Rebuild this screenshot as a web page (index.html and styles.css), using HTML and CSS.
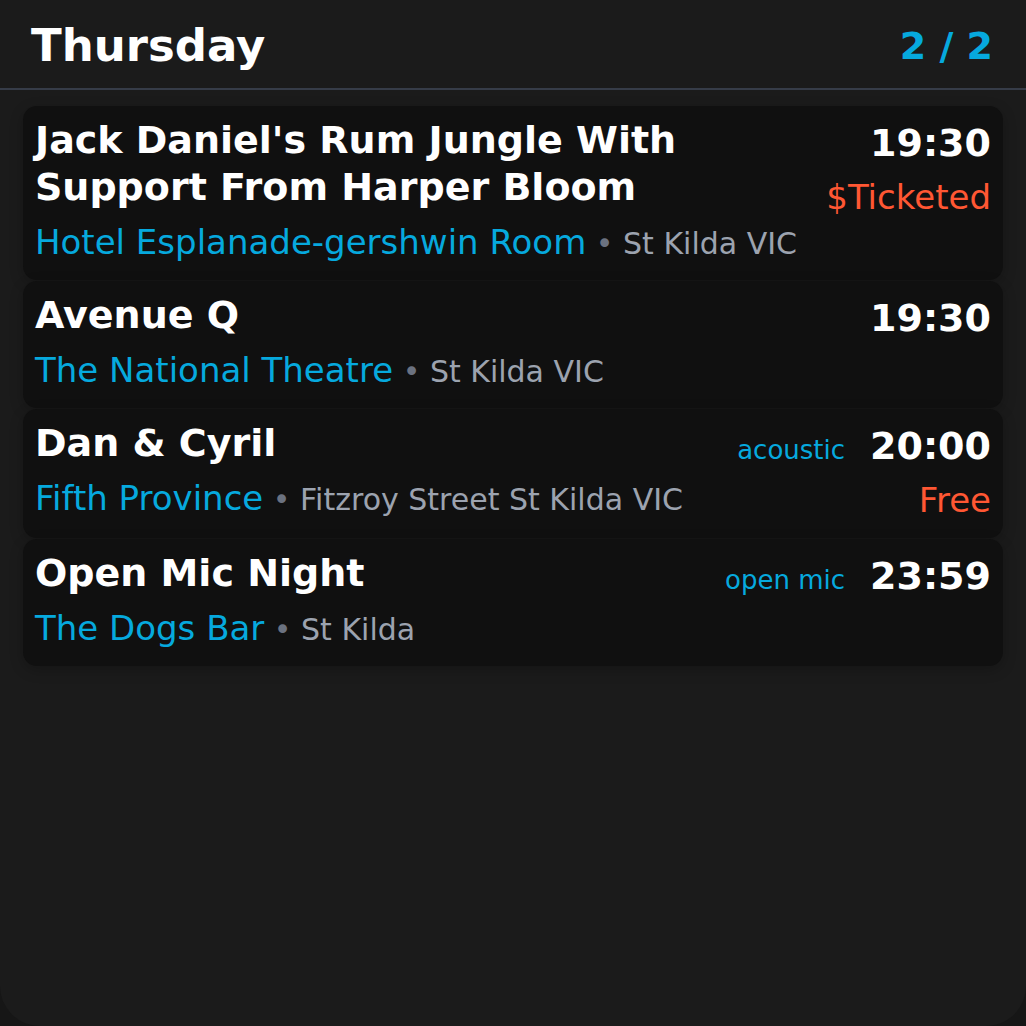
FILE: index.html
```html
<!DOCTYPE html>
<html lang="en">
<head>
<meta charset="utf-8">
<title>Thursday</title>
<link rel="stylesheet" href="styles.css">
</head>
<body>
<div class="widget">
  <header class="head">
    <h1 class="day">Thursday</h1>
    <span class="page">2 / 2</span>
  </header>
  <div class="list">
    <div class="card">
      <div class="main">
        <div class="title">Jack Daniel's Rum Jungle With Support From Harper Bloom</div>
        <div class="meta"><span class="venue">Hotel Esplanade-gershwin Room</span><span class="dot"> • </span><span class="loc">St Kilda VIC</span></div>
      </div>
      <div class="side">
        <div class="when"><span class="time">19:30</span></div>
        <div class="price">$Ticketed</div>
      </div>
    </div>
    <div class="card">
      <div class="main">
        <div class="title">Avenue Q</div>
        <div class="meta"><span class="venue">The National Theatre</span><span class="dot"> • </span><span class="loc">St Kilda VIC</span></div>
      </div>
      <div class="side">
        <div class="when"><span class="time">19:30</span></div>
      </div>
    </div>
    <div class="card">
      <div class="main">
        <div class="title">Dan &amp; Cyril</div>
        <div class="meta"><span class="venue">Fifth Province</span><span class="dot"> • </span><span class="loc">Fitzroy Street St Kilda VIC</span></div>
      </div>
      <div class="side">
        <div class="when"><span class="tag">acoustic</span><span class="time">20:00</span></div>
        <div class="price">Free</div>
      </div>
    </div>
    <div class="card">
      <div class="main">
        <div class="title">Open Mic Night</div>
        <div class="meta"><span class="venue">The Dogs Bar</span><span class="dot"> • </span><span class="loc">St Kilda</span></div>
      </div>
      <div class="side">
        <div class="when"><span class="tag">open mic</span><span class="time">23:59</span></div>
      </div>
    </div>
  </div>
</div>
</body>
</html>
```
FILE: styles.css
```css
html, body {
  margin: 0;
  padding: 0;
  background: #161616;
}
body {
  font-family: "DejaVu Sans", "Liberation Sans", sans-serif;
  color: #ffffff;
}
.widget {
  width: 1026px;
  height: 1026px;
  box-sizing: border-box;
  background: #1b1b1b;
  border-radius: 0 0 40px 40px;
  overflow: hidden;
}
.head {
  display: flex;
  align-items: center;
  justify-content: space-between;
  padding: 19px 33px 16px 31px;
  border-bottom: 2px solid #363c48;
}
.day {
  margin: 0;
  font-size: 45px;
  font-weight: bold;
  line-height: 53px;
  color: #ffffff;
}
.page {
  font-size: 38px;
  font-weight: bold;
  color: #06a9de;
}
.list {
  display: flex;
  flex-direction: column;
  gap: 1px;
  padding: 16px 23px;
}
.card {
  display: flex;
  justify-content: space-between;
  gap: 24px;
  padding: 11px 12px 16px;
  background: #101010;
  border-radius: 14px;
  box-shadow: 0 4px 14px rgba(0, 0, 0, 0.22);
}
.main {
  flex: 1;
  min-width: 0;
}
.title {
  font-size: 38px;
  font-weight: bold;
  line-height: 47px;
  color: #ffffff;
}
.meta {
  margin-top: 9px;
  font-size: 34px;
  line-height: 44px;
  white-space: nowrap;
}
.venue {
  font-size: 34px;
  line-height: 1;
  color: #06a9de;
}
.dot {
  font-size: 30px;
  line-height: 1;
  color: #6b7280;
  white-space: pre;
}
.loc {
  font-size: 30px;
  line-height: 1;
  color: #9ca3af;
}
.side {
  display: flex;
  flex-direction: column;
  align-items: flex-end;
  flex-shrink: 0;
}
.when {
  display: flex;
  align-items: baseline;
  gap: 25px;
  height: 52px;
}
.time {
  font-size: 38px;
  font-weight: bold;
  line-height: 52px;
  color: #ffffff;
}
.tag {
  font-size: 26px;
  line-height: 1;
  color: #06a9de;
}
.price {
  margin-top: 6px;
  font-size: 34px;
  line-height: 44px;
  color: #ff5733;
}
```
